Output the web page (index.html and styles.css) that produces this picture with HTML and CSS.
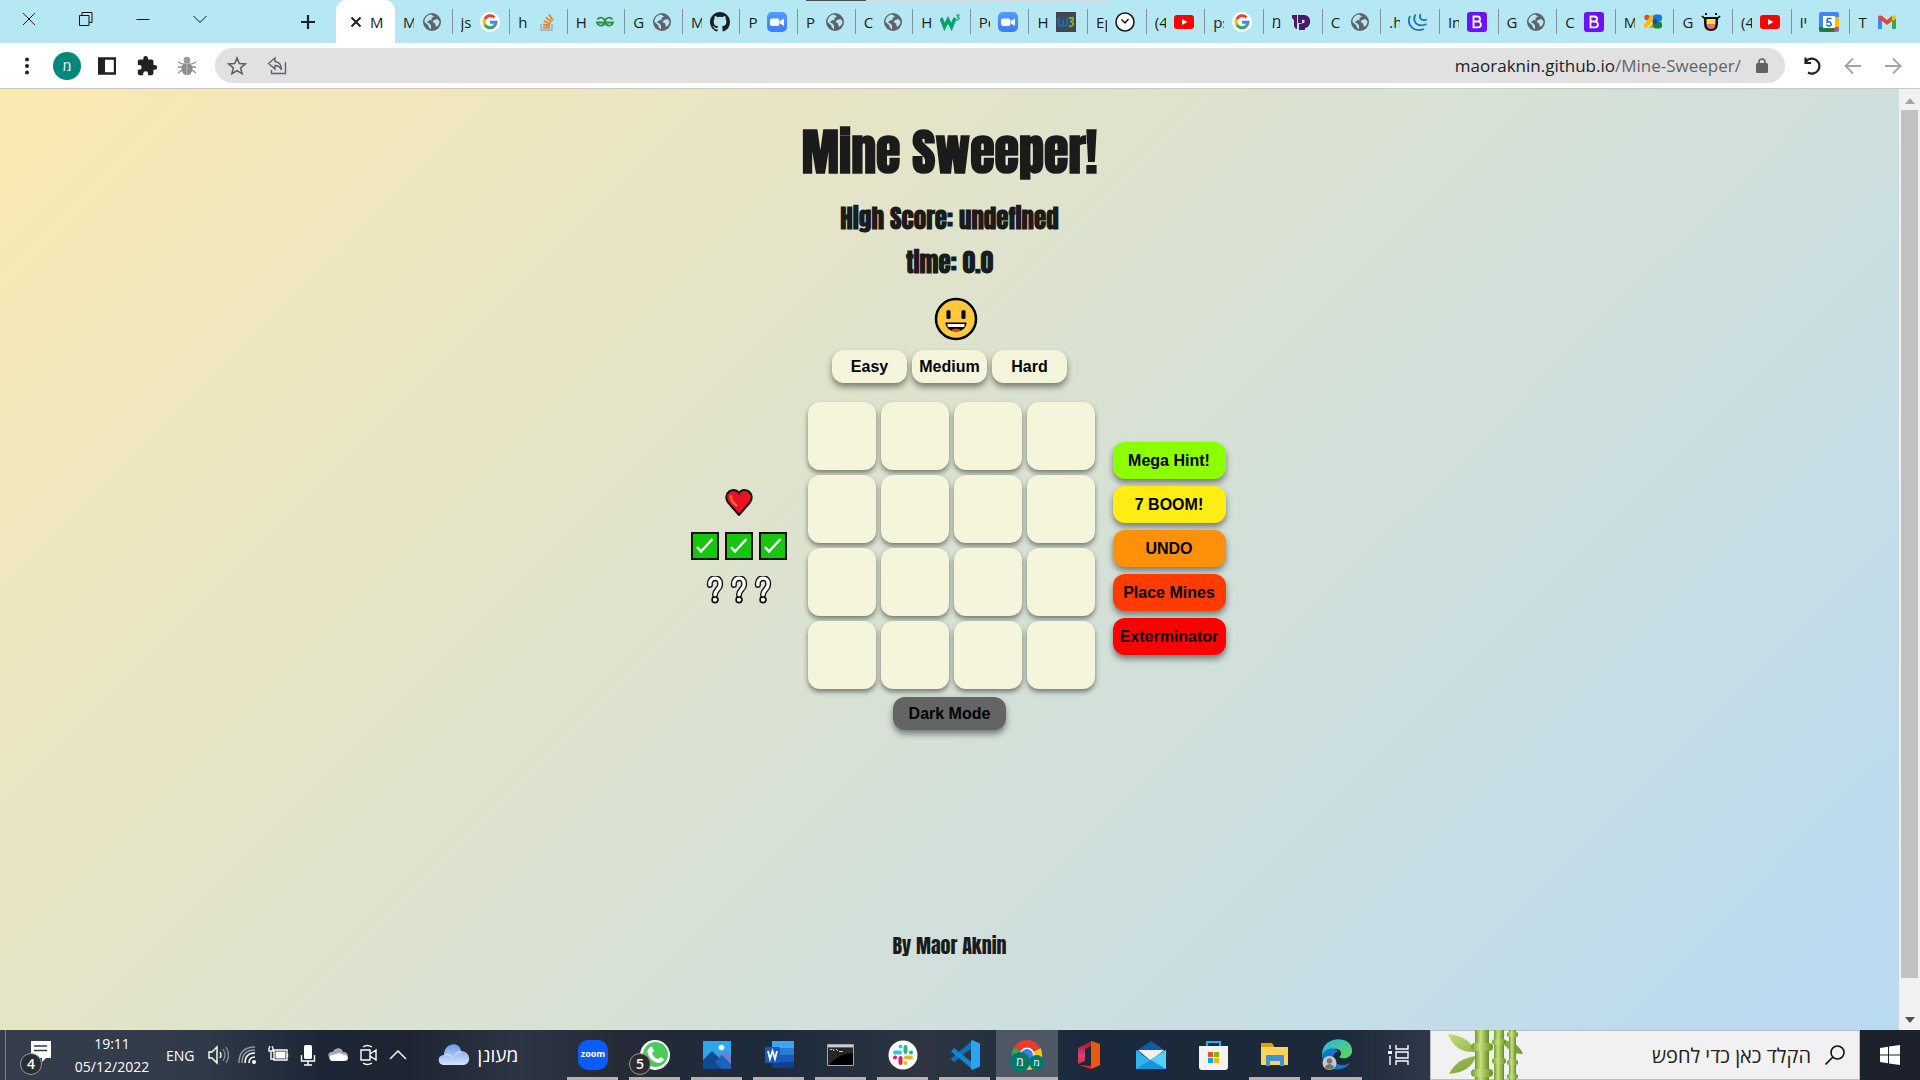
FILE: index.html
```html
<!DOCTYPE html>
<html lang="en">
<head>
<meta charset="utf-8">
<title>Mine Sweeper</title>
<link rel="stylesheet" href="styles.css">
</head>
<body>
<svg class="defs" aria-hidden="true">
  <defs>
    <linearGradient id="cane" x1="0" x2="1"><stop offset="0" stop-color="#6d9c2c"/><stop offset=".4" stop-color="#c9e07f"/><stop offset="1" stop-color="#5f8f1f"/></linearGradient>
    <linearGradient id="leaf" x1="0" x2="1" y2="1"><stop offset="0" stop-color="#c4da78"/><stop offset="1" stop-color="#568515"/></linearGradient>
    <linearGradient id="sky" x2="0" y2="1"><stop offset="0" stop-color="#6d9bea"/><stop offset="1" stop-color="#d5e4fc"/></linearGradient>
    <linearGradient id="zoomg" x2="0" y2="1"><stop offset="0" stop-color="#4f9dff"/><stop offset="1" stop-color="#3d7bff"/></linearGradient>
    <linearGradient id="officeg" x2="0" y2="1"><stop offset="0" stop-color="#a3121c"/><stop offset=".5" stop-color="#d0447c"/><stop offset="1" stop-color="#f0201c"/></linearGradient>
    <linearGradient id="edgeg" x1="0" x2="1" y2="1"><stop offset="0" stop-color="#25b5ec"/><stop offset="1" stop-color="#62d84c"/></linearGradient>
  </defs>
  <symbol id="globe" viewBox="0 0 20 20"><circle cx="10" cy="10" r="9" fill="#5f6368"/><path d="M9 2.500C5 3 2.500 6 2.500 10l4 3.500v1.500l2.500 2.500v-4l-2-2.500H5l1.500-2.500 3-.5V6l2.500-1.500zM12 8l-1.500 2 2.500 1.500 1 3.500c2-1 3.500-3 3.500-5.500L15.500 7z" fill="#b5e8f3"/></symbol>
  <symbol id="google" viewBox="0 0 20 20"><circle cx="10" cy="10" r="10" fill="#fff"/><g fill="none" stroke-width="3"><path d="M14.500 5.500A6 6 0 0 0 4.800 7.200" stroke="#ea4335"/><path d="M4.800 7.200a6 6 0 0 0 0 5.600" stroke="#fbbc05"/><path d="M4.800 12.800a6 6 0 0 0 9 1.700" stroke="#34a853"/><path d="M13.800 14.500A6 6 0 0 0 16 10.200H10" stroke="#4285f4"/></g></symbol>
  <symbol id="stack" viewBox="0 0 20 20"><path d="M4 12v6h11v-6" fill="none" stroke="#a5a9ad" stroke-width="1.500"/><path d="M6 15.500h7M6 12.500l7 1M7 9l6.500 3M9 5.500l5.500 4.500M12 2.500l4 6" stroke="#f48024" stroke-width="1.800"/></symbol>
  <symbol id="geeks" viewBox="0 0 20 20"><path d="M2.500 7.500A4 4 0 1 1 2 10.500H9M17.500 7.500A4 4 0 1 0 18 10.500H11" fill="none" stroke="#2f8d46" stroke-width="1.800"/></symbol>
  <symbol id="github" viewBox="0 0 16 16"><path fill="#1b1f23" d="M8 0C3.580 0 0 3.580 0 8c0 3.540 2.290 6.530 5.470 7.590.4.070.55-.17.55-.38 0-.19-.01-.82-.01-1.490-2.010.37-2.530-.49-2.690-.94-.09-.23-.48-.94-.82-1.130-.28-.15-.68-.52-.01-.53.63-.01 1.080.58 1.230.82.72 1.210 1.870.87 2.330.66.07-.52.28-.87.51-1.070-1.780-.2-3.640-.89-3.640-3.950 0-.87.31-1.590.82-2.150-.08-.2-.36-1.020.08-2.120 0 0 .67-.21 2.200.82a7.600 7.600 0 0 1 4 0c1.530-1.040 2.200-.82 2.200-.82.44 1.100.16 1.920.08 2.120.51.56.82 1.270.82 2.150 0 3.070-1.870 3.750-3.650 3.950.29.25.54.73.54 1.480 0 1.070-.01 1.930-.01 2.200 0 .21.15.46.55.38A8 8 0 0 0 16 8c0-4.420-3.580-8-8-8z"/></symbol>
  <symbol id="zoomcam" viewBox="0 0 20 20"><rect width="20" height="20" rx="5" fill="url(#zoomg)"/><rect x="3" y="6.500" width="9.500" height="7.500" rx="2" fill="#fff"/><path d="M13 9l4-2.500v7.500l-4-2.500z" fill="#fff"/></symbol>
  <symbol id="wthree" viewBox="0 0 20 20"><path d="M1 6l3.500 9L8 8l3.500 7L15 6" fill="none" stroke="#04a56c" stroke-width="3.500"/><path d="M16 3h3l-1.500 2q2 0 1.500 1.700T16 8" fill="none" stroke="#04a56c" stroke-width="1.200"/></symbol>
  <symbol id="wb" viewBox="0 0 20 20"><rect width="20" height="20" fill="#42474f"/><path d="M2.500 5.500v6q0 2.500 2 2.500t2.500-2.500v-4 4q0 2.500 2 2.500t2-2.500v-6" fill="none" stroke="#1c6bb0" stroke-width="2"/><path d="M13 6h4q.5 3-3 3.500 4 .5 3 3.500-1.500 2-4 1" fill="none" stroke="#7cab38" stroke-width="2"/></symbol>
  <symbol id="clock" viewBox="0 0 20 20"><circle cx="10" cy="10" r="9" fill="#fff" stroke="#16181b" stroke-width="1.600"/><path d="M6.500 7.500L10 11l3.500-4" fill="none" stroke="#16181b" stroke-width="1.500"/></symbol>
  <symbol id="youtube" viewBox="0 0 20 20"><rect y="3" width="20" height="14" rx="3" fill="#f00"/><path d="M8 7l5.500 3L8 13z" fill="#fff"/></symbol>
  <symbol id="dd" viewBox="0 0 20 20"><path d="M1 3h5v14q-3-1-3-4V8L1 6zM7 3h6c8 0 8 12 1 13v2H8v-6l5-1q2-4-2-3v3H7z" fill="#4b1769"/></symbol>
  <symbol id="jquery" viewBox="0 0 20 20"><g fill="none" stroke="#1a73b2" stroke-width="1.800"><path d="M2 4c-4 9 4 17 14 13"/><path d="M7.500 2.500c-4 7 2 13.500 11 9.500"/><path d="M12.500 2c-2 5 2 7.500 6.500 5.500"/></g></symbol>
  <symbol id="bootstrap" viewBox="0 0 20 20"><rect width="20" height="20" rx="3" fill="#7011f5"/><path d="M6.500 4.500h4a2.500 2.500 0 0 1 0 5h-4zM6.500 9.500H11a2.900 2.900 0 0 1 0 5.800H6.500z" fill="none" stroke="#fff" stroke-width="1.800"/></symbol>
  <symbol id="studio" viewBox="0 0 20 20"><circle cx="4" cy="5.500" r="2.700" fill="#ea4335"/><path d="M8 3h2v6L3 16H1v-3z" fill="#fbbc04"/><path d="M6 16l4-5v5z" fill="#f29900"/><rect x="10" y="2.500" width="9" height="7" rx="3" fill="#1a73e8"/><rect x="10" y="9.500" width="9" height="7" rx="3" fill="#188038"/><circle cx="12" cy="9.500" r="2.500" fill="#174ea6"/></symbol>
  <symbol id="face" viewBox="0 0 20 20"><path d="M3 5h14v6q0 8-7 8t-7-8z" fill="#111"/><path d="M5.500 7h9v5h-9z" fill="#fbe04b"/><path d="M5.500 12h9q0 5-4.500 5t-4.500-5z" fill="#f36c7d"/><path d="M1 4q2 3 6 2M19 4q-2 3-6 2" stroke="#111" stroke-width="1.800" fill="none"/><path d="M4 1h2v2H4zM14 1h2v2h-2z" fill="#111"/></symbol>
  <symbol id="calendar" viewBox="0 0 20 20"><rect width="20" height="20" rx="2" fill="#4285f4"/><path d="M15 5h5v10h-5z" fill="#fbbc04"/><path d="M0 15h15v5H2q-2 0-2-2z" fill="#188038"/><path d="M15 15h5l-5 5z" fill="#ea4335"/><path d="M4 4h12v12H4z" fill="#fff"/><path d="M12.500 6.500H8.500L8 10c4-1.500 6 4 2 4q-2 0-2.500-1.500" fill="none" stroke="#1967d2" stroke-width="1.500"/></symbol>
  <symbol id="gmail" viewBox="0 0 20 20"><path d="M1 5v12h4V8z" fill="#4285f4"/><path d="M19 5v12h-4V8z" fill="#34a853"/><path d="M1 5q1-3 4-1l5 4 5-4 0 5-5 4-5-4-4-3z" fill="#ea4335"/><path d="M15 4q3-2 4 1v2l-4 2z" fill="#fbbc04"/></symbol>
  <symbol id="check" viewBox="0 0 28 28"><rect x="1" y="1" width="26" height="26" fill="#16c60c" stroke="#111" stroke-width="2"/><path d="M6 15l4 4.500L21.500 7" fill="none" stroke="#fff" stroke-width="2.500"/></symbol>
  <symbol id="question" viewBox="0 0 18 30"><path d="M3.500 9.500C2.500 0 15.500 0 14.500 9c0 5-5.500 6-5.500 11" fill="none" stroke="#111" stroke-width="6.500" stroke-linecap="round"/><circle cx="9" cy="25.500" r="4" fill="#111"/><path d="M3.500 9.500C2.500 0 15.500 0 14.500 9c0 5-5.500 6-5.500 11" fill="none" stroke="#fff" stroke-width="3.600" stroke-linecap="round"/><circle cx="9" cy="25.500" r="2.200" fill="#fff"/></symbol>
</svg>

<header class="browser">
  <div class="overlay-bar" aria-hidden="true"></div>
  <div class="tabstrip">
    <div class="window-buttons">
      <button type="button" aria-label="Close window"><svg width="14" height="14" viewBox="0 0 14 14"><path d="M1 1l12 12M13 1L1 13"/></svg></button>
      <button type="button" aria-label="Restore window"><svg width="14" height="14" viewBox="0 0 14 14"><path d="M.5 3.500h9.500v10H.5zM3 3.500v-3h10v10h-3"/></svg></button>
      <button type="button" aria-label="Minimise window"><svg width="14" height="14" viewBox="0 0 14 14"><path d="M.5 7.500h13"/></svg></button>
      <button type="button" aria-label="Search tabs"><svg width="14" height="14" viewBox="0 0 14 14"><path d="M.5 4L7 10.500 13.500 4"/></svg></button>
    </div>
    <button class="new-tab" type="button" aria-label="New tab"><svg width="16" height="16" viewBox="0 0 16 16"><path d="M8 1v14M1 8h14" stroke="#202124" stroke-width="2.200"/></svg></button>
    <div class="tab-active"><svg width="12" height="12" viewBox="0 0 12 12"><path d="M1.500 1.500l9 9M10.500 1.500l-9 9" stroke="#202124" stroke-width="2"/></svg><span>M</span></div>
    <nav class="tabs" aria-label="Open tabs">
      <div class="tab narrow"><span>M</span><svg><use href="#globe"/></svg></div>
      <div class="tab narrow"><span>js</span><svg><use href="#google"/></svg></div>
      <div class="tab narrow"><span>h</span><svg><use href="#stack"/></svg></div>
      <div class="tab narrow"><span>H</span><svg><use href="#geeks"/></svg></div>
      <div class="tab narrow"><span>G</span><svg><use href="#globe"/></svg></div>
      <div class="tab narrow"><span>M</span><svg><use href="#github"/></svg></div>
      <div class="tab narrow"><span>P</span><svg><use href="#zoomcam"/></svg></div>
      <div class="tab narrow"><span>P</span><svg><use href="#globe"/></svg></div>
      <div class="tab narrow"><span>C</span><svg><use href="#globe"/></svg></div>
      <div class="tab narrow"><span>H</span><svg><use href="#wthree"/></svg></div>
      <div class="tab"><span>Po</span><svg><use href="#zoomcam"/></svg></div>
      <div class="tab"><span>H</span><svg><use href="#wb"/></svg></div>
      <div class="tab"><span>Ep</span><svg><use href="#clock"/></svg></div>
      <div class="tab"><span>(4</span><svg><use href="#youtube"/></svg></div>
      <div class="tab"><span>ps</span><svg><use href="#google"/></svg></div>
      <div class="tab"><span>מ</span><svg><use href="#dd"/></svg></div>
      <div class="tab"><span>C</span><svg><use href="#globe"/></svg></div>
      <div class="tab"><span>.h</span><svg><use href="#jquery"/></svg></div>
      <div class="tab"><span>In</span><svg><use href="#bootstrap"/></svg></div>
      <div class="tab"><span>G</span><svg><use href="#globe"/></svg></div>
      <div class="tab"><span>C</span><svg><use href="#bootstrap"/></svg></div>
      <div class="tab"><span>M</span><svg><use href="#studio"/></svg></div>
      <div class="tab"><span>G</span><svg><use href="#face"/></svg></div>
      <div class="tab"><span>(4</span><svg><use href="#youtube"/></svg></div>
      <div class="tab"><span>יו</span><svg><use href="#calendar"/></svg></div>
      <div class="tab"><span>T</span><svg><use href="#gmail"/></svg></div>
    </nav>
  </div>
  <div class="toolbar">
    <div class="tools">
      <button type="button" aria-label="Menu"><svg width="20" height="20" viewBox="0 0 20 20"><g fill="#202124"><circle cx="10" cy="3.500" r="2"/><circle cx="10" cy="10" r="2"/><circle cx="10" cy="16.500" r="2"/></g></svg></button>
      <button type="button" class="avatar">מ</button>
      <button type="button" aria-label="Side panel"><svg width="18" height="18" viewBox="0 0 18 18"><path d="M1 1.500h16v15H1z" fill="none" stroke="#202124" stroke-width="2.400"/><path d="M1 1h6v16H1z" fill="#202124"/></svg></button>
      <button type="button" aria-label="Extensions"><svg width="22" height="22" viewBox="0 0 24 24"><path fill="#202124" d="M20.500 11H19V7c0-1.100-.9-2-2-2h-4V3.500a2.500 2.500 0 0 0-5 0V5H4c-1.100 0-2 .9-2 2v3.800h1.500a2.700 2.700 0 0 1 0 5.400H2V20c0 1.100.9 2 2 2h3.800v-1.500a2.700 2.700 0 0 1 5.400 0V22H17c1.100 0 2-.9 2-2v-4h1.500a2.500 2.500 0 0 0 0-5z"/></svg></button>
      <button type="button" aria-label="Debugger"><svg width="20" height="20" viewBox="0 0 20 20"><path d="M5 8L1 6M5 11H1M5 14l-4 3M15 8l4-2M15 11h4M15 14l4 3" stroke="#8c8c8c" stroke-width="1.300"/><circle cx="10" cy="4" r="3.300" fill="#9b9b9b"/><ellipse cx="10" cy="12.500" rx="5.500" ry="6.800" fill="#8c8c8c"/><path d="M5 7.500h10M10 8v11" stroke="#b9b9b9"/></svg></button>
    </div>
    <form class="omnibox">
      <button type="button" aria-label="Bookmark"><svg width="20" height="20" viewBox="0 0 20 20"><path d="M10 2l2.300 5.500 5.900.5-4.500 3.900 1.400 5.800L10 14.600l-5.100 3.100 1.400-5.800L1.800 8l5.900-.5z" fill="none" stroke="#5f6368" stroke-width="1.600"/></svg></button>
      <button type="button" aria-label="Share"><svg width="20" height="20" viewBox="0 0 20 20"><path d="M8 2L1.500 7.500 8 13v-3.500c3 0 5 1 6.500 4.500C14.500 9 12 6 8 5.500z" fill="none" stroke="#5f6368" stroke-width="1.400"/><path d="M4.500 14v3.500h14V6" fill="none" stroke="#5f6368" stroke-width="1.400"/></svg></button>
      <a class="url" href="https://maoraknin.github.io/Mine-Sweeper/">maoraknin.github.io<span>/Mine-Sweeper/</span></a>
      <svg width="12" height="16" viewBox="0 0 12 16"><rect y="5" width="12" height="10" rx="1.500" fill="#5f6368"/><path d="M3 6V4a3 3 0 0 1 6 0v2" fill="none" stroke="#5f6368" stroke-width="1.600"/></svg>
    </form>
    <div class="navigation">
      <button type="button" aria-label="Reload"><svg width="20" height="20" viewBox="0 0 20 20"><path d="M3 5.500A7.500 7.500 0 1 1 5 16.500M2.500 1.500v5.500H8" fill="none" stroke="#202124" stroke-width="2.200"/></svg></button>
      <button type="button" aria-label="Forward"><svg width="20" height="20" viewBox="0 0 20 20"><path d="M18 10H3M10 2.500L2.500 10l7.500 7.500" fill="none" stroke="#a3a5a8" stroke-width="1.800"/></svg></button>
      <button type="button" aria-label="Back"><svg width="20" height="20" viewBox="0 0 20 20"><path d="M2 10h15M10 2.500l7.500 7.500-7.500 7.500" fill="none" stroke="#a3a5a8" stroke-width="1.800"/></svg></button>
    </div>
  </div>
</header>

<div class="viewport">
  <main class="game">
    <h1>Mine Sweeper!</h1>
    <h2>High Score: undefined</h2>
    <h2>time: 0.0</h2>
    <button class="smiley" type="button" aria-label="Restart"><svg width="44" height="44" viewBox="0 0 44 44"><circle cx="22" cy="22" r="20" fill="#ffc83d" stroke="#000" stroke-width="2.500"/><rect x="12.500" y="13" width="4" height="9" rx="1.500"/><rect x="27.500" y="13" width="4" height="9" rx="1.500"/><path d="M11.500 25.500h21c0 12-21 12-21 0z"/><path d="M13.500 27h17v3h-17z" fill="#fff"/><ellipse cx="22" cy="33" rx="4" ry="1.500" fill="#f03a17"/></svg></button>
    <div class="levels">
      <button class="pill" type="button">Easy</button>
      <button class="pill" type="button">Medium</button>
      <button class="pill" type="button">Hard</button>
    </div>
    <section class="play">
      <div class="status">
        <div><svg width="28" height="28" viewBox="0 0 28 28"><path d="M14 27L3 14.500C-3 5 9-2.500 14 5c5-7.500 17 0 11 9.500z" fill="#e81224" stroke="#111" stroke-width="2"/><path d="M6 7q-1 6 6 11" fill="none" stroke="#f4683f" stroke-width="2.400"/></svg></div>
        <div><svg width="28" height="28"><use href="#check"/></svg><svg width="28" height="28"><use href="#check"/></svg><svg width="28" height="28"><use href="#check"/></svg></div>
        <div><svg width="18" height="28"><use href="#question"/></svg><svg width="18" height="28"><use href="#question"/></svg><svg width="18" height="28"><use href="#question"/></svg></div>
      </div>
      <div class="board">
        <button type="button" aria-label="Cell 1"></button><button type="button" aria-label="Cell 2"></button><button type="button" aria-label="Cell 3"></button><button type="button" aria-label="Cell 4"></button>
        <button type="button" aria-label="Cell 5"></button><button type="button" aria-label="Cell 6"></button><button type="button" aria-label="Cell 7"></button><button type="button" aria-label="Cell 8"></button>
        <button type="button" aria-label="Cell 9"></button><button type="button" aria-label="Cell 10"></button><button type="button" aria-label="Cell 11"></button><button type="button" aria-label="Cell 12"></button>
        <button type="button" aria-label="Cell 13"></button><button type="button" aria-label="Cell 14"></button><button type="button" aria-label="Cell 15"></button><button type="button" aria-label="Cell 16"></button>
      </div>
      <div class="actions">
        <button class="pill lime" type="button">Mega Hint!</button>
        <button class="pill yellow" type="button">7 BOOM!</button>
        <button class="pill orange" type="button">UNDO</button>
        <button class="pill vermilion" type="button">Place Mines</button>
        <button class="pill red" type="button">Exterminator</button>
      </div>
    </section>
    <button class="pill dark" type="button">Dark Mode</button>
    <footer>By Maor Aknin</footer>
  </main>
  <div class="scrollbar" aria-hidden="true">
    <svg width="10" height="6" viewBox="0 0 10 6"><path d="M0 6l5-6 5 6z" fill="#a3a3a3"/></svg>
    <div class="thumb"></div>
    <svg width="10" height="6" viewBox="0 0 10 6"><path d="M0 0l5 6 5-6z" fill="#505050"/></svg>
  </div>
</div>

<footer class="taskbar">
  <div class="tray">
    <div class="notice"><svg width="34" height="34" viewBox="0 0 34 34"><path d="M11 3h20v17h-5l-4 4v-4H11z" fill="#fff"/><path d="M14 8h13M14 12.500h13" stroke="#2f3848" stroke-width="1.500"/></svg><span class="count">4</span></div>
    <div class="clock"><time>19:11</time><time>05/12/2022</time></div>
    <span class="lang">ENG</span>
    <div class="indicators">
      <svg viewBox="0 0 22 22"><path d="M2 8h3l5-5v16l-5-5H2z" fill="none" stroke="#fff" stroke-width="1.400"/><path d="M13 8q2 3 0 6" fill="none" stroke="#fff" stroke-width="1.300"/><path d="M16 5q4 6 0 12M19 3q5 8 0 16" fill="none" stroke="#8a919c" stroke-width="1.300"/></svg>
      <svg viewBox="0 0 22 22"><circle cx="17" cy="18" r="2" fill="#fff"/><path d="M12 19q0-6 6-6M8 19q0-10 10-10" fill="none" stroke="#fff" stroke-width="1.500"/><path d="M5 19Q5 6 18 6M2 19Q2 3 18 3" fill="none" stroke="#8f97a3" stroke-width="1.500"/></svg>
      <svg viewBox="0 0 22 22"><path d="M7 6h13v10H7zM20.500 10v3M2 4v3h4V4M4 8v7h3M2.500 2v2M5.500 2v2" fill="none" stroke="#fff" stroke-width="1.400"/><path d="M8.500 7.500h10v7h-10z" fill="#fff"/></svg>
      <svg viewBox="0 0 22 22"><rect x="7" y="1" width="8" height="14" rx="1.500" fill="#fff"/><path d="M4.500 11v6h13v-6M11 17v4M7 21h8" fill="none" stroke="#fff" stroke-width="1.400"/></svg>
      <svg viewBox="0 0 22 22"><path d="M3 14C-1 11 3 7 6 8c2-5 9-5 10 0 6 0 6 6 3 8z" fill="#a7abb1"/><path d="M5 17c-4-1-3-6 1-6l6-2 5 2c5 0 5 6 1 6z" fill="#fff"/></svg>
      <svg viewBox="0 0 22 22"><path d="M4 6h9v10H4zM13 10l6-4v10l-6-4M6 3q4-3 9 0M6 19q4 3 9 0" fill="none" stroke="#fff" stroke-width="1.400"/></svg>
      <svg viewBox="0 0 22 22"><path d="M3 15l8-8 8 8" fill="none" stroke="#fff" stroke-width="1.500"/></svg>
    </div>
    <div class="weather"><svg width="32" height="24" viewBox="0 0 32 24"><path d="M6 22C-1 22-1 12 6 12 6-1 22-2 23 8c10 0 11 14 2 14z" fill="url(#sky)"/><path d="M7 12q4-2 7 2M17 12q3-4 7-3" fill="none" stroke="#c4d8fa" stroke-width="1.500"/></svg><span lang="he">מעונן</span></div>
  </div>
  <nav class="apps" aria-label="Applications">
    <button class="running" type="button" aria-label="Zoom"><span class="zoom-logo">zoom</span></button>
    <button class="running" type="button" aria-label="WhatsApp"><svg viewBox="0 0 32 32"><circle cx="16" cy="16" r="15" fill="#fff"/><circle cx="16.500" cy="15.500" r="12.500" fill="#4bc95a"/><path d="M1 31l3-9 6 6z" fill="#fff"/><path d="M10 9c3-3 4 0 5 3l-2 2c1 3 3 5 6 6l2-2c3 1 5 2 3 4-6 7-20-7-14-13z" fill="#fff"/></svg><span class="count">5</span></button>
    <button class="running" type="button" aria-label="Photos"><svg viewBox="0 0 32 32"><path d="M2 2h28v28H2z" fill="#29a9e8"/><path d="M18 16l7-4 5 4v14H18z" fill="#6f7fd3"/><path d="M2 21l9-9 19 18H2z" fill="#124a8f"/><path d="M14 23l7-7 9 9v5H21z" fill="#1d62b5"/><circle cx="20.500" cy="8.500" r="2.800" fill="#fff"/></svg></button>
    <button class="running" type="button" aria-label="Word"><svg viewBox="0 0 32 32"><path d="M9 2h22v7H9z" fill="#41a5ee"/><path d="M9 9h22v7H9z" fill="#2b7cd3"/><path d="M9 16h22v7H9z" fill="#185abd"/><path d="M9 23h22v6H9z" fill="#103f91"/><rect x="2" y="8" width="15" height="16" rx="1" fill="#185abd"/><path d="M5 12l2 8 2.500-8 2.500 8 2-8" fill="none" stroke="#fff" stroke-width="1.800"/></svg></button>
    <button class="running" type="button" aria-label="Command Prompt"><svg viewBox="0 0 32 32"><path d="M2.500 5.500h26v21h-26z" fill="#000" stroke="#a2a7ad"/><path d="M3 6h25v2.500H3z" fill="#c7cbd0"/><path d="M3 9h25v5Q14 14 4 26H3z" fill="#272727"/><path d="M5 10.500h2M8 10l1 2M11 10l2 2M14 12.500h4" stroke="#ccc"/></svg></button>
    <button class="running" type="button" aria-label="Slack"><svg viewBox="0 0 32 32"><circle cx="16" cy="16" r="14.500" fill="#fff"/><g stroke-width="4" stroke-linecap="round"><path d="M8 13.500h5M13.500 7.500v.1" stroke="#36c5f0"/><path d="M18.500 8v5M24 13.500h.1" stroke="#2eb67d"/><path d="M19 18.500h5M18.500 24v.1" stroke="#ecb22e"/><path d="M13.500 19v5M8 18.500h.1" stroke="#e01e5a"/></g></svg></button>
    <button class="running" type="button" aria-label="Visual Studio Code"><svg viewBox="0 0 32 32"><path d="M24 1v7L5 23l-3-2.500v-1z" fill="#0b72bd"/><path d="M2 12.500L5 9l19 15v7z" fill="#1683cf"/><path d="M23 1l8 3.500v23L23 31l-1-1V2z" fill="#2aa4f0"/></svg></button>
    <button class="running current" type="button" aria-label="Chrome"><svg viewBox="0 0 32 32"><path d="M16 16L3 8.500a15 15 0 0 1 26 0z" fill="#ea3b2e"/><path d="M16 16L29.500 9A15 15 0 0 1 16 31z" fill="#fcc31e"/><path d="M16 16v15A15 15 0 0 1 3 8.500z" fill="#34a853"/><circle cx="16" cy="16" r="7.500" fill="#fff"/><circle cx="16" cy="16" r="6" fill="#3b7de9"/></svg><span class="profile">מ</span><span class="profile small">מ</span></button>
    <button type="button" aria-label="Office"><svg viewBox="0 0 32 32"><path d="M18 2l9 3v21l-9 4-12-4 12 1V7l-6 3v12l-7 3V9z" fill="url(#officeg)"/><path d="M18 2l9 3v21l-9 4z" fill="#e8590c"/></svg></button>
    <button type="button" aria-label="Mail"><svg viewBox="0 0 32 32"><path d="M1 12L16 2l15 10v3H1z" fill="#0f5ba9"/><path d="M3 11h26L16 22z" fill="#f1f1f1"/><path d="M1 11l15 11L31 11v19H1z" fill="#2fb4ee"/><path d="M1 30l30-19v19z" fill="#1795df"/><path d="M16 21l15-10v19z" fill="#54d1fa"/></svg></button>
    <button type="button" aria-label="Store"><svg viewBox="0 0 32 32"><path d="M10 8V3h13v5" fill="none" stroke="#28aaf0" stroke-width="2.200"/><path d="M2 7h29v21q0 3-3 3H5q-3 0-3-3z" fill="#f3f3f3"/><path d="M11 13h5v5h-5z" fill="#f25022"/><path d="M17 13h5v5h-5z" fill="#7fba00"/><path d="M11 19h5v5h-5z" fill="#00a4ef"/><path d="M17 19h5v5h-5z" fill="#ffb900"/></svg></button>
    <button class="running" type="button" aria-label="File Explorer"><svg viewBox="0 0 32 32"><path d="M2 4h11l2 3v5H2z" fill="#e0a106"/><path d="M2 8h27v18H2z" fill="#ffd45c"/><path d="M7 27V17q0-1 1-1h16q1 0 1 1v10h-4v-5H11v5z" fill="#3d92dc"/></svg></button>
    <button class="running" type="button" aria-label="Edge"><svg viewBox="0 0 32 32"><path d="M1 17C0-5 32-4 31 12c0 7-9 9-13 6 5-4 0-9-5-8C8 11 3 13 1 17z" fill="url(#edgeg)"/><path d="M1 17c2-8 13-10 16-4-7 0-7 14 5 13 4 0 6-2 7-2-6 10-27 9-28-7z" fill="#1673c9"/><circle cx="8.500" cy="24" r="7" fill="#c9c9c9"/><circle cx="8.500" cy="22" r="2.800" fill="#737373"/><path d="M3.500 28q5-6 10 0-5 5-10 0z" fill="#737373"/></svg></button>
    <button type="button" aria-label="Task view"><svg viewBox="0 0 32 32"><path d="M7 6v4M7 17v9M13 6v4h12V6M13 13h12v6H13zM13 26v-4h12v4" fill="none" stroke="#fff" stroke-width="1.400"/><path d="M5 12h4v3H5z" fill="#fff"/></svg></button>
  </nav>
  <label class="search">
    <svg class="bamboo" width="78" height="50" viewBox="0 0 78 50"><path d="M1 4q22 2 27 18-20 1-27-18zM2 44q8-16 27-18-5 16-27 18zM54 10q16 0 22 14-14 0-22-14z" fill="url(#leaf)"/><g fill="url(#cane)"><path d="M28 0h14v50H28z"/><path d="M47 0h10v50H47z"/><path d="M62 0h7v50h-7z"/><rect x="24" y="13" width="22" height="8" rx="4"/><rect x="24" y="39" width="22" height="8" rx="4"/><rect x="45" y="9" width="14" height="6" rx="3"/><rect x="45" y="28" width="14" height="6" rx="3"/><rect x="60" y="2" width="11" height="5" rx="2"/><rect x="60" y="30" width="11" height="5" rx="2"/><rect x="60" y="44" width="11" height="5" rx="2"/></g></svg>
    <input type="text" dir="rtl" placeholder="הקלד כאן כדי לחפש" aria-label="Search">
    <svg width="20" height="20" viewBox="0 0 20 20"><circle cx="12.500" cy="7.500" r="6.500" fill="none" stroke="#111" stroke-width="1.600"/><path d="M8 12L.5 19.500" stroke="#111" stroke-width="1.600"/></svg>
  </label>
  <button class="start" type="button" aria-label="Start"><svg width="20" height="20" viewBox="0 0 20 20"><path d="M0 3l8-1.200v7.700H0zM9 1.600L20 0v9.500H9zM0 10.500h8v7.700L0 17zM9 10.500h11V20L9 18.400z" fill="#fff"/></svg></button>
</footer>
</body>
</html>
```
FILE: styles.css
```css
* { box-sizing: border-box; }

body {
  margin: 0;
  height: 100vh;
  display: flex;
  flex-direction: column;
  overflow: hidden;
  font-family: "Open Sans", "Liberation Sans", sans-serif;
  color: #1b1b1b;
}

button { border: 0; padding: 0; background: none; color: inherit; font: inherit; }
.defs { position: absolute; width: 0; height: 0; }

/* Browser frame */
.browser { position: relative; background: #fff; border-bottom: 1px solid #c6c8ca; }
.overlay-bar {
  position: absolute;
  top: 0;
  left: 42%;
  width: 301px;
  height: 1px;
  background: linear-gradient(to right, #4c4c4c 60px, #dcdcdc 60px);
}
.tabstrip { display: flex; height: 43px; background: #b5e8f3; }
.window-buttons { display: flex; padding-bottom: 6px; }
.window-buttons button { width: 57px; display: grid; place-items: center; }
.window-buttons path { fill: none; stroke: #111; stroke-width: 1; }
.new-tab { width: 56px; margin-left: 52px; display: grid; place-items: center; }
.tab-active {
  width: 59px;
  display: flex;
  align-items: center;
  gap: 8px;
  padding-left: 14px;
  border-radius: 10px 10px 0 0;
  background: #fff;
  font-size: 15px;
}
.tab-active span { width: 14px; overflow: hidden; }
.tabs { flex: 1; min-width: 0; display: flex; align-items: center; padding-right: 12px; }
.tab {
  flex: 235 1 0;
  min-width: 0;
  height: 25px;
  display: flex;
  align-items: center;
  gap: 8px;
  padding-left: 8px;
  border-right: 1px solid #80959b;
  font-size: 15px;
}
.tab.narrow { flex-grow: 230; }
.tab:last-child { border-right: 0; }
.tab span { width: 11px; overflow: hidden; white-space: nowrap; }
.tab svg { width: 20px; height: 20px; flex: none; }

.toolbar { display: flex; align-items: center; height: 45px; }
.tools, .navigation { display: flex; }
.tools { padding-left: 7px; padding-right: 8px; }
.tools button, .navigation button { width: 40px; height: 28px; display: grid; place-items: center; }
.tools .avatar { width: 28px; margin: 0 6px; border-radius: 50%; background: #00897b; color: #fff; font-size: 14px; }
.navigation { padding-left: 8px; padding-right: 7px; }
.omnibox {
  flex: 1;
  display: flex;
  align-items: center;
  height: 35px;
  padding: 0 17px 0 12px;
  gap: 20px;
  border-radius: 18px;
  background: #e1e1e1;
}
.omnibox button { display: grid; place-items: center; }
.url { margin-left: auto; margin-right: -5px; color: #202124; font-size: 17px; text-decoration: none; }
.url span { color: #5f6368; }
.omnibox > svg { flex: none; }

/* Page viewport */
.viewport { flex: 1; min-height: 0; display: flex; }
.game {
  flex: 1;
  display: flex;
  flex-direction: column;
  align-items: center;
  background: linear-gradient(135deg, #fae9b2, #b8daf3);
  font-family: Anton, "Liberation Sans Narrow", "Liberation Sans", sans-serif;
}
.game h1 { margin: 25px 0 5px; font-size: 50px; line-height: 76px; }
.game h2 { margin: 4px 0 0; font-size: 25px; line-height: 40px; }
.smiley { margin: 14px 0 9px 13px; height: 44px; }
.levels { display: flex; gap: 5px; }
.pill {
  width: 75px;
  height: 33px;
  border-radius: 12px;
  background: #f5f5dc;
  box-shadow: 0 4px 6px rgba(0, 0, 0, .45);
  color: #000;
  font: bold 16px "Liberation Sans", Arial, sans-serif;
  white-space: nowrap;
}
.play {
  width: 100%;
  display: grid;
  grid-template-columns: 1fr auto 1fr;
  align-items: center;
  margin: 19px 0 8px;
  padding-left: 3px;
}
.status { justify-self: end; margin-right: 21px; display: grid; gap: 16px; justify-items: center; }
.status div { display: flex; gap: 6px; }
.board { display: grid; grid-template-columns: repeat(4, 68px); gap: 5px; }
.board button { aspect-ratio: 1; border-radius: 12px; background: #f5f5dc; box-shadow: 0 3px 5px rgba(0, 0, 0, .45); }
.actions { display: grid; gap: 7px; margin-left: 18px; margin-top: 6px; }
.actions .pill { width: 113px; height: 37px; }
.pill.lime { background: #8cff00; }
.pill.yellow { background: #ffed14; }
.pill.orange { background: #ff900a; }
.pill.vermilion { background: #ff3b00; }
.pill.red { background: #f00; }
.pill.dark { width: 113px; background: #646464; }
.game footer { margin-top: 198px; font-size: 20px; line-height: 36px; }

.scrollbar {
  width: 21px;
  display: flex;
  flex-direction: column;
  align-items: center;
  gap: 6px;
  padding: 9px 0 7px;
  background: #f1f1f1;
}
.scrollbar .thumb { width: 17px; flex: 1; margin-bottom: 33px; background: #c1c1c1; }

/* Taskbar */
.taskbar {
  display: flex;
  height: 50px;
  color: #fff;
  background: linear-gradient(to right, #353d4c, #303b4a 200px, #1c2636 320px, #1e2432 410px, #2d3444 520px, #252a36 620px, #1c2b3b 780px, #2d3543 930px, #1a2a3c 1080px, #1c293a 1340px, #303848 1430px, #1e222c);
}
.tray { flex: 1; display: flex; align-items: center; margin-left: 5px; border-left: 1px solid #777f89; align-self: stretch; }
.notice { position: relative; width: 34px; height: 34px; margin-left: 14px; }
.count {
  position: absolute;
  left: 0;
  bottom: -3px;
  width: 22px;
  height: 22px;
  border: 1px solid #98999b;
  border-radius: 50%;
  background: #2c2d30;
  color: #fff;
  font-size: 14px;
  font-weight: 600;
  line-height: 20px;
  text-align: center;
}
.clock { width: 80px; margin-left: 18px; font-size: 14px; line-height: 23px; text-align: center; }
.clock time { display: block; white-space: nowrap; }
.lang { margin-left: 14px; font-size: 14px; }
.indicators { display: flex; gap: 8px; margin-left: 12px; }
.indicators svg { width: 22px; height: 22px; }
.weather { display: flex; align-items: center; gap: 8px; margin-left: 29px; font-size: 19px; }
.apps { display: flex; }
.apps button { position: relative; width: 62px; display: grid; place-items: center; }
.apps svg { width: 32px; height: 32px; }
.apps .running::after { content: ""; position: absolute; left: 5px; right: 6px; bottom: 0; height: 3px; background: #b7b1b2; }
.apps .current { background: #4d5766; }
.apps .current::after { left: 0; right: 0; }
.apps .count { left: 5px; bottom: 5px; }
.zoom-logo { width: 30px; height: 30px; border-radius: 10px; background: #0b5cff; font-size: 9px; font-weight: 700; line-height: 28px; }
.profile { position: absolute; left: 14px; bottom: 8px; width: 20px; height: 20px; border-radius: 50%; background: #00796b; font-size: 12px; line-height: 19px; }
.profile.small { left: 33px; bottom: 10px; width: 15px; height: 15px; font-size: 10px; line-height: 14px; }
.search { flex: 0 0 430px; display: flex; align-items: center; gap: 14px; padding: 0 14px 0 16px; border: 1px solid #bdbdbd; background: #f1f1f1; }
.search .bamboo { align-self: center; flex: none; }
.search input { flex: 1; min-width: 0; border: 0; padding: 0; background: none; font: 20px "Open Sans", "Liberation Sans", sans-serif; color: #222; }
.search input::placeholder { color: #222; opacity: 1; }
.start { width: 60px; display: grid; place-items: center; background: #1d212b; }
```
